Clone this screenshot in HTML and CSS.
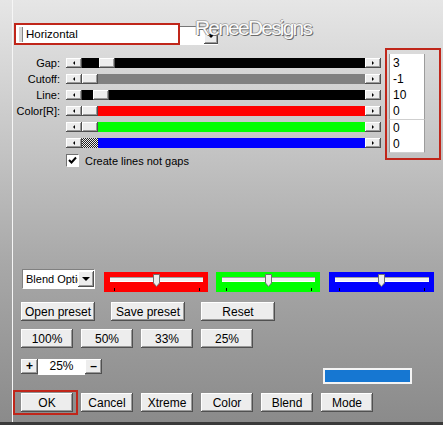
FILE: index.html
```html
<!DOCTYPE html>
<html lang="en">
<head>
    <meta charset="UTF-8">
    <meta name="viewport" content="width=device-width, initial-scale=1.0">
    <title>Lines - Horizontal</title>
    <link rel="stylesheet" href="styles.css">
</head>
<body>
<div class="window">
    <div class="watermark">ReneeDesigns</div>

    <div class="panel">
        <!-- preset name -->
        <div class="preset-row">
            <div class="mark name-mark">
                <div class="name-field"><span class="grip"></span>Horizontal</div>
            </div>
            <div class="combo">
                <span class="bevel combo-btn"><span class="tri-down"></span></span>
            </div>
        </div>

        <!-- sliders + values -->
        <div class="controls">
            <div class="sliders">
                <div class="slider-row">
                    <span class="slider-label">Gap:</span>
                    <span class="bevel step"><span class="tri-left"></span></span>
                    <div class="track track-black"><span class="bevel thumb" style="margin-left:17px"></span></div>
                    <span class="bevel step"><span class="tri-right"></span></span>
                </div>
                <div class="slider-row">
                    <span class="slider-label">Cutoff:</span>
                    <span class="bevel step"><span class="tri-left"></span></span>
                    <div class="track track-gray"><span class="bevel thumb"></span></div>
                    <span class="bevel step"><span class="tri-right"></span></span>
                </div>
                <div class="slider-row">
                    <span class="slider-label">Line:</span>
                    <span class="bevel step"><span class="tri-left"></span></span>
                    <div class="track track-black"><span class="bevel thumb" style="margin-left:11px"></span></div>
                    <span class="bevel step"><span class="tri-right"></span></span>
                </div>
                <div class="slider-row">
                    <span class="slider-label">Color[R]:</span>
                    <span class="bevel step"><span class="tri-left"></span></span>
                    <div class="track track-red"><span class="bevel thumb"></span></div>
                    <span class="bevel step"><span class="tri-right"></span></span>
                </div>
                <div class="slider-row">
                    <span class="slider-label"></span>
                    <span class="bevel step"><span class="tri-left"></span></span>
                    <div class="track track-green"><span class="bevel thumb"></span></div>
                    <span class="bevel step"><span class="tri-right"></span></span>
                </div>
                <div class="slider-row">
                    <span class="slider-label"></span>
                    <span class="bevel step"><span class="tri-left"></span></span>
                    <div class="track track-blue"><span class="thumb thumb-dither"></span></div>
                    <span class="bevel step"><span class="tri-right"></span></span>
                </div>
                <label class="check-row">
                    <span class="checkbox">
                        <svg width="9" height="9" viewBox="0 0 9 9"><path d="M1 4 L3.5 6.5 L8 1.5" fill="none" stroke="#000" stroke-width="2"/></svg>
                    </span>
                    Create lines not gaps
                </label>
            </div>

            <div class="mark values-mark">
                <div class="values values-top">
                    <div>3</div><div>-1</div><div>10</div><div>0</div>
                </div>
                <div class="values">
                    <div>0</div><div>0</div>
                </div>
            </div>
        </div>

        <!-- blend options -->
        <div class="blend-row">
            <div class="select">
                <span class="select-text">Blend Options</span>
                <span class="bevel select-btn"><span class="tri-down"></span></span>
            </div>
            <div class="mini-slider mini-red">
                <span class="mini-track"></span>
                <svg class="mini-thumb" width="7" height="13" viewBox="0 0 7 13"><path d="M0.5 0.5 H6.5 V9 L3.5 12.5 L0.5 9 Z" fill="#ececec" stroke="#707070"/></svg>
                <span class="tick tick-left"></span><span class="tick tick-right"></span>
            </div>
            <div class="mini-slider mini-green">
                <span class="mini-track"></span>
                <svg class="mini-thumb" width="7" height="13" viewBox="0 0 7 13"><path d="M0.5 0.5 H6.5 V9 L3.5 12.5 L0.5 9 Z" fill="#ececec" stroke="#707070"/></svg>
                <span class="tick tick-left"></span><span class="tick tick-right"></span>
            </div>
            <div class="mini-slider mini-blue">
                <span class="mini-track"></span>
                <svg class="mini-thumb" width="7" height="13" viewBox="0 0 7 13"><path d="M0.5 0.5 H6.5 V9 L3.5 12.5 L0.5 9 Z" fill="#ececec" stroke="#707070"/></svg>
                <span class="tick tick-left"></span><span class="tick tick-right"></span>
            </div>
        </div>

        <div class="button-row row-preset">
            <button class="bevel btn btn-wide">Open preset</button>
            <button class="bevel btn btn-wide">Save preset</button>
            <button class="bevel btn btn-wide">Reset</button>
        </div>

        <div class="button-row row-zoom">
            <button class="bevel btn">100%</button>
            <button class="bevel btn">50%</button>
            <button class="bevel btn">33%</button>
            <button class="bevel btn">25%</button>
        </div>

        <div class="scale-row">
            <button class="bevel btn-small">+</button>
            <span class="scale-value">25%</span>
            <button class="bevel btn-small">&ndash;</button>
            <span class="swatch"></span>
        </div>

        <div class="button-row row-bottom">
            <div class="mark ok-mark"><button class="bevel btn">OK</button></div>
            <button class="bevel btn">Cancel</button>
            <button class="bevel btn">Xtreme</button>
            <button class="bevel btn">Color</button>
            <button class="bevel btn">Blend</button>
            <button class="bevel btn">Mode</button>
        </div>
    </div>
</div>
</body>
</html>
```

FILE: styles.css
```css
html, body{
    overflow: hidden;
}
body{
    margin: 0;
    width: 443px;
    height: 425px;
    background: linear-gradient(#e6e6e6, #c4c4c4 35%, #a8a8a8 62%, #8a8a8a);
    font-family: "Liberation Sans", Arial, sans-serif;
    font-size: 11px;
    color: #000;
}
.window{
    position: relative;
    box-sizing: border-box;
    height: 425px;
    padding-left: 12px;
    border-bottom: 3px solid #3a3a3a;
}
.panel{
    height: 100%;
    box-sizing: border-box;
    border-left: 1px solid #f6f6f6;
    padding: 23px 0 0 8px;
}
.watermark{
    position: absolute;
    left: 195px;
    top: 17px;
    font-size: 21px;
    line-height: 21px;
    letter-spacing: -1.8px;
    color: #fbfbfb;
    text-shadow: 1px 1px 0 #6c6c6c, -1px 0 0 #a0a0a0, 0 -1px 0 #b0b0b0;
}

/* shared bevel look */
.bevel{
    background-color: #ededed;
    box-shadow: inset -1px -1px #505050, inset 1px 1px #fff, inset -2px -2px #9a9a9a;
}
.mark{
    border: 2px solid #c0261a;
    box-sizing: border-box;
}

/* preset name */
.preset-row{
    display: flex;
    height: 22px;
}
.name-mark{
    margin-left: -7px;
    width: 166px;
    height: 22px;
}
.name-field{
    height: 100%;
    background-color: #fff;
    display: flex;
    align-items: center;
    font-size: 11.5px;
}
.grip{
    width: 3px;
    height: 15px;
    margin: 0 3px 0 2px;
    background-color: #d6d6d6;
    border-left: 1px solid #fff;
    border-right: 1px solid #888;
}
.combo{
    width: 38px;
    height: 18px;
    margin-top: 3px;
    background-color: #fff;
    border-top: 1px solid #777;
    display: flex;
    justify-content: flex-end;
}
.combo-btn{
    width: 14px;
    height: 17px;
    display: flex;
    align-items: center;
    justify-content: center;
}

/* sliders */
.controls{
    display: flex;
    align-items: flex-start;
    margin-top: 3px;
    margin-left: -8px;
}
.sliders{
    padding-top: 7px;
}
.slider-row{
    display: flex;
    align-items: center;
    height: 16px;
}
.slider-label{
    width: 47px;
    margin-right: 6px;
    text-align: right;
    white-space: nowrap;
}
.step{
    width: 16px;
    height: 10px;
    display: flex;
    align-items: center;
    justify-content: center;
}
.tri-left{
    border-top: 2px solid transparent;
    border-bottom: 2px solid transparent;
    border-right: 2px solid #000;
}
.tri-right{
    border-top: 2px solid transparent;
    border-bottom: 2px solid transparent;
    border-left: 2px solid #000;
}
.tri-down{
    border-left: 4px solid transparent;
    border-right: 4px solid transparent;
    border-top: 4px solid #000;
}
.track{
    width: 283px;
    height: 10px;
    display: flex;
}
.track-black{ background-color: #000; }
.track-gray{ background-color: #808080; }
.track-red{ background-color: #ff0000; }
.track-green{ background-color: #00ff00; }
.track-blue{ background-color: #0000ff; }
.thumb{
    width: 16px;
    height: 10px;
}
.thumb-dither{
    background: repeating-conic-gradient(#202020 0 25%, #f0f0f0 0 50%) 0 0 / 2px 2px;
}
.check-row{
    display: flex;
    align-items: center;
    margin: 3px 0 0 53px;
    height: 13px;
}
.checkbox{
    width: 11px;
    height: 11px;
    margin-right: 6px;
    background-color: #fff;
    border-top: 1px solid #707070;
    border-left: 1px solid #707070;
    border-right: 1px solid #fff;
    border-bottom: 1px solid #fff;
    display: flex;
    align-items: center;
    justify-content: center;
}

/* value column */
.values-mark{
    margin-left: 4px;
    width: 56px;
    height: 112px;
    padding: 4px 0 0 2px;
}
.values{
    width: 36px;
    box-sizing: border-box;
    background-color: #fff;
    border-left: 1px solid #9c9c9c;
    border-right: 1px solid #9c9c9c;
    border-bottom: 1px solid #cfcfcf;
    padding-left: 3px;
    font-size: 12px;
    line-height: 16px;
}
.values-top{
    height: 66px;
    padding-top: 1px;
}

/* blend row */
.blend-row{
    display: flex;
    align-items: flex-start;
    margin-top: 102px;
}
.select{
    margin-left: 1px;
    width: 73px;
    height: 20px;
    box-sizing: border-box;
    background-color: #fff;
    border-top: 1px solid #808080;
    border-left: 1px solid #808080;
    border-right: 1px solid #fff;
    border-bottom: 1px solid #fff;
    display: flex;
    align-items: center;
    font-size: 11px;
    overflow: hidden;
}
.select-text{
    width: 53px;
    padding-left: 3px;
    white-space: nowrap;
    overflow: hidden;
}
.select-btn{
    width: 16px;
    height: 16px;
    display: flex;
    align-items: center;
    justify-content: center;
}
.mini-slider{
    position: relative;
    width: 104px;
    height: 20px;
    margin-top: 3px;
    margin-left: 8px;
}
.mini-red{ background-color: #ff0000; margin-left: 9px; }
.mini-green{ background-color: #00ff00; }
.mini-blue{ background-color: #0000ff; margin-left: 9px; width: 105px; }
.mini-track{
    position: absolute;
    left: 6px;
    right: 5px;
    top: 5px;
    height: 3px;
    background-color: #f2f2f2;
    border-top: 1px solid #a0a0a0;
    border-bottom: 1px solid #fff;
}
.mini-thumb{
    position: absolute;
    left: 49px;
    top: 2px;
}
.tick{
    position: absolute;
    bottom: 1px;
    width: 1px;
    height: 3px;
    background-color: #000;
}
.tick-left{ left: 10px; }
.tick-right{ left: 95px; }

/* buttons */
.button-row{
    display: flex;
    gap: 8px;
}
.btn{
    width: 52px;
    height: 19px;
    padding: 0;
    border: none;
    font-family: "Liberation Sans", Arial, sans-serif;
    font-size: 12px;
    color: #000;
}
.btn-wide{
    width: 74px;
}
.row-preset{
    margin-top: 10px;
    gap: 16px;
}
.row-zoom{
    margin-top: 8px;
}
.scale-row{
    display: flex;
    align-items: flex-start;
    margin-top: 11px;
}
.btn-small{
    width: 17px;
    height: 15px;
    padding: 0;
    border: none;
    font-family: "Liberation Sans", Arial, sans-serif;
    font-size: 12px;
    font-weight: bold;
    line-height: 13px;
}
.scale-value{
    width: 47px;
    height: 16px;
    background-color: #fff;
    text-align: center;
    font-size: 12px;
    line-height: 14px;
}
.swatch{
    margin: 9px 0 0 221px;
    width: 89px;
    height: 16px;
    box-sizing: border-box;
    border: 2px solid #f4f4f4;
    background-color: #1677d2;
}
.row-bottom{
    margin-top: 6px;
    align-items: flex-start;
}
.row-bottom .btn{
    margin-top: 3px;
}
.ok-mark{
    margin-left: -8px;
    padding: 1px 3px 1px 6px;
    margin-right: -5px;
}
.ok-mark .btn{
    margin-top: 0;
    display: block;
}
```
